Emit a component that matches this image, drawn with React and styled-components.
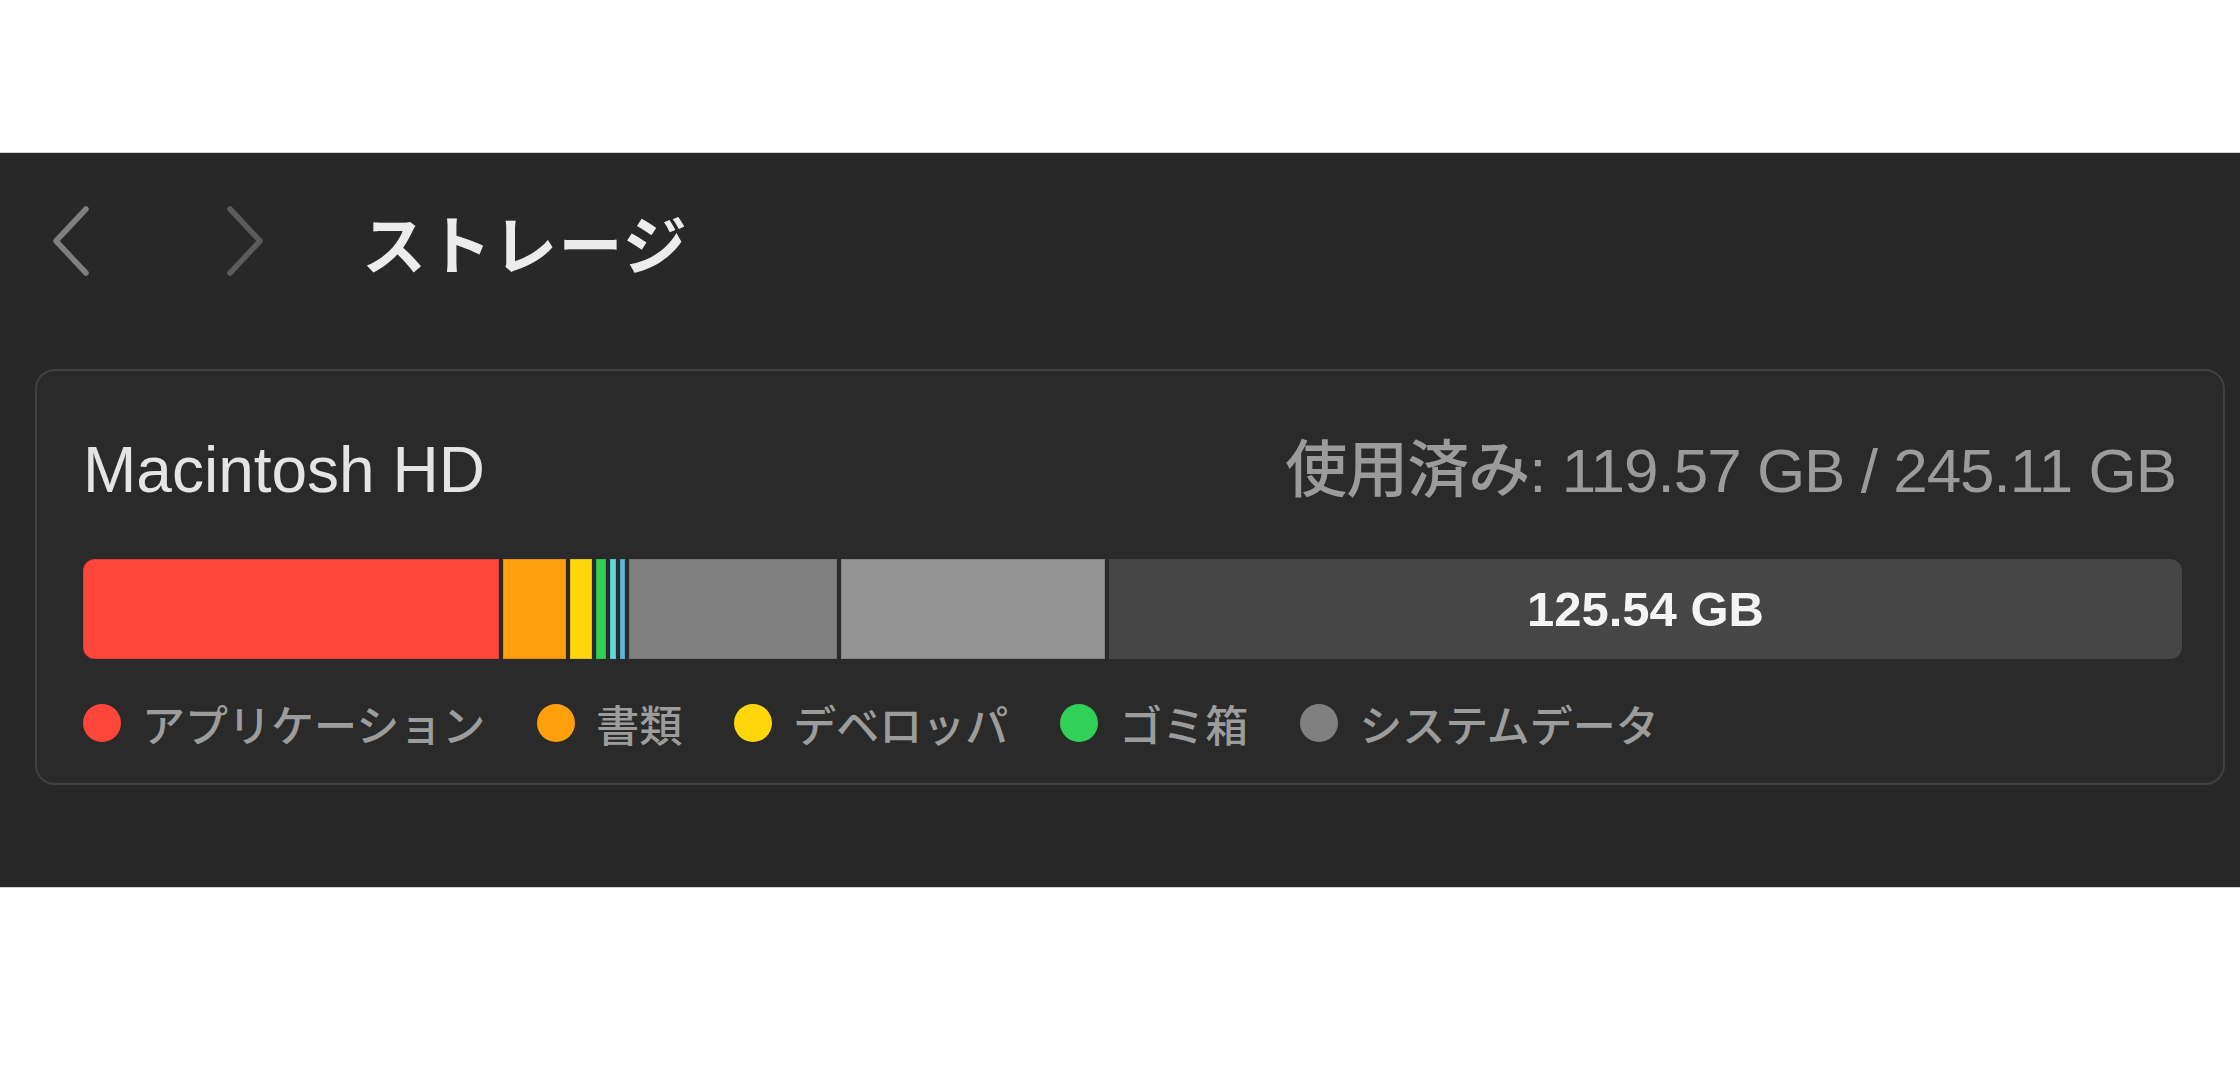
import React from "react";
import styled, { createGlobalStyle } from "styled-components";

const GlobalStyle = createGlobalStyle`
  html, body {
    margin: 0;
    padding: 0;
    background: #ffffff;
  }
  body {
    font-family: "Liberation Sans", "Noto Sans CJK JP", sans-serif;
  }
`;

const Page = styled.div`
  width: 2240px;
  height: 1070px;
  padding-top: 153px;
  box-sizing: border-box;
`;

const Panel = styled.div`
  height: 734px;
  background: #282828;
  box-shadow: 0 -1px 0 #cfcfcf, 0 1px 0 #cfcfcf;
  padding: 0 15px 0 35px;
  box-sizing: border-box;
  display: flex;
  flex-direction: column;
`;

const Toolbar = styled.div`
  height: 176px;
  display: flex;
  align-items: center;
  padding-left: 14px;
`;

const NavButton = styled.button`
  border: 0;
  background: none;
  padding: 0;
  width: 44px;
  height: 72px;
  display: flex;
  align-items: center;
  justify-content: center;
  color: ${(p) => (p.$disabled ? "#5b5b5b" : "#7f7f7f")};
  margin-right: ${(p) => p.$gap}px;
`;

const Title = styled.h1`
  margin: 0;
  font-family: "Noto Sans CJK JP", sans-serif;
  font-weight: 700;
  font-size: 64px;
  letter-spacing: 1.5px;
  line-height: 80px;
  color: #ececec;
`;

const Card = styled.section`
  margin-top: 40px;
  border: 2px solid #414141;
  border-radius: 20px;
  background: #2a2a2a;
  padding: 61px 41px 35px 46px;
  display: flex;
  flex-direction: column;
`;

const CardHeader = styled.div`
  display: flex;
  justify-content: space-between;
  align-items: baseline;
  height: 76px;
`;

const DiskName = styled.div`
  font-size: 64px;
  line-height: 76px;
  color: #e4e4e4;
`;

const UsedText = styled.div`
  font-size: 62px;
  font-weight: 500;
  line-height: 76px;
  letter-spacing: -1px;
  color: #9b9b9b;
  margin-right: 6px;
`;

const Bar = styled.div`
  margin-top: 51px;
  height: 100px;
  display: flex;
  gap: 4px;
`;

const Segment = styled.div`
  flex: ${(p) => (p.$rest ? "1 1 auto" : `0 0 ${p.$w}px`)};
  background: ${(p) => p.$color};
  box-shadow: inset 0 0 0 1px rgba(0, 0, 0, 0.1);
  display: flex;
  align-items: center;
  justify-content: center;
  &:first-child {
    border-radius: 12px 0 0 12px;
  }
  &:last-child {
    border-radius: 0 12px 12px 0;
    box-shadow: none;
  }
`;

const FreeLabel = styled.span`
  font-size: 49px;
  font-weight: 700;
  color: #f4f4f4;
`;

const Legend = styled.div`
  margin-top: 39px;
  display: flex;
  align-items: center;
  gap: 52px;
  height: 50px;
`;

const LegendItem = styled.div`
  display: flex;
  align-items: center;
  gap: 21px;
`;

const Dot = styled.span`
  width: 38px;
  height: 38px;
  border-radius: 50%;
  background: ${(p) => p.$color};
`;

const LegendLabel = styled.span`
  font-family: "Noto Sans CJK JP", sans-serif;
  font-size: 43px;
  font-weight: 500;
  line-height: 50px;
  color: #9c9c9c;
`;

const segments = [
  { w: 416, color: "#fe4539" },
  { w: 63, color: "#ff9f0b" },
  { w: 22, color: "#ffd60a" },
  { w: 10, color: "#31d158" },
  { w: 6, color: "#5bd8e0" },
  { w: 5, color: "#5ab8da" },
  { w: 208, color: "#808080" },
  { w: 264, color: "#939393" },
];

const legend = [
  { label: "アプリケーション", color: "#fe4539" },
  { label: "書類", color: "#ff9f0b" },
  { label: "デベロッパ", color: "#ffd60a" },
  { label: "ゴミ箱", color: "#31d158" },
  { label: "システムデータ", color: "#808080" },
];

function Chevron({ dir }) {
  const d = dir === "left" ? "M37 4 L7 36 L37 68" : "M7 4 L37 36 L7 68";
  return (
    <svg width="44" height="72" viewBox="0 0 44 72" fill="none">
      <path
        d={d}
        stroke="currentColor"
        strokeWidth="5.5"
        strokeLinecap="round"
        strokeLinejoin="round"
      />
    </svg>
  );
}

export default function App() {
  return (
    <Page>
      <GlobalStyle />
      <Panel>
        <Toolbar>
          <NavButton $gap={130}>
            <Chevron dir="left" />
          </NavButton>
          <NavButton $disabled $gap={95}>
            <Chevron dir="right" />
          </NavButton>
          <Title>ストレージ</Title>
        </Toolbar>

        <Card>
          <CardHeader>
            <DiskName>Macintosh HD</DiskName>
            <UsedText>使用済み: 119.57 GB / 245.11 GB</UsedText>
          </CardHeader>

          <Bar>
            {segments.map((s, i) => (
              <Segment key={i} $w={s.w} $color={s.color} />
            ))}
            <Segment $rest $color="#464646">
              <FreeLabel>125.54 GB</FreeLabel>
            </Segment>
          </Bar>

          <Legend>
            {legend.map((item) => (
              <LegendItem key={item.label}>
                <Dot $color={item.color} />
                <LegendLabel>{item.label}</LegendLabel>
              </LegendItem>
            ))}
          </Legend>
        </Card>
      </Panel>
    </Page>
  );
}
